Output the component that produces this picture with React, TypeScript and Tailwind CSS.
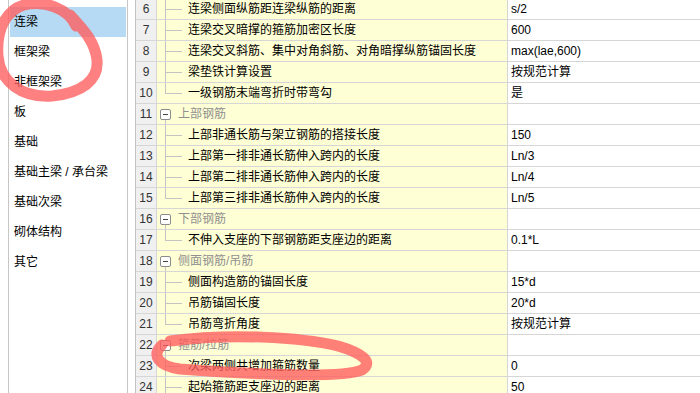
import React from "react";

type Row = {
  n: number;
  kind: "item" | "group";
  label: string;
  value?: string;
  last?: boolean;
};

const rows: Row[] = [
  { n: 6, kind: "item", label: "连梁侧面纵筋距连梁纵筋的距离", value: "s/2" },
  { n: 7, kind: "item", label: "连梁交叉暗撑的箍筋加密区长度", value: "600" },
  { n: 8, kind: "item", label: "连梁交叉斜筋、集中对角斜筋、对角暗撑纵筋锚固长度", value: "max(lae,600)" },
  { n: 9, kind: "item", label: "梁垫铁计算设置", value: "按规范计算" },
  { n: 10, kind: "item", label: "一级钢筋末端弯折时带弯勾", value: "是", last: true },
  { n: 11, kind: "group", label: "上部钢筋" },
  { n: 12, kind: "item", label: "上部非通长筋与架立钢筋的搭接长度", value: "150" },
  { n: 13, kind: "item", label: "上部第一排非通长筋伸入跨内的长度", value: "Ln/3" },
  { n: 14, kind: "item", label: "上部第二排非通长筋伸入跨内的长度", value: "Ln/4" },
  { n: 15, kind: "item", label: "上部第三排非通长筋伸入跨内的长度", value: "Ln/5", last: true },
  { n: 16, kind: "group", label: "下部钢筋" },
  { n: 17, kind: "item", label: "不伸入支座的下部钢筋距支座边的距离", value: "0.1*L", last: true },
  { n: 18, kind: "group", label: "侧面钢筋/吊筋" },
  { n: 19, kind: "item", label: "侧面构造筋的锚固长度", value: "15*d" },
  { n: 20, kind: "item", label: "吊筋锚固长度", value: "20*d" },
  { n: 21, kind: "item", label: "吊筋弯折角度", value: "按规范计算", last: true },
  { n: 22, kind: "group", label: "箍筋/拉筋" },
  { n: 23, kind: "item", label: "次梁两侧共增加箍筋数量", value: "0" },
  { n: 24, kind: "item", label: "起始箍筋距支座边的距离", value: "50" },
];

const menu = ["连梁", "框架梁", "非框架梁", "板", "基础", "基础主梁 / 承台梁", "基础次梁", "砌体结构", "其它"];

function TreeCell({ row }: { row: Row }) {
  if (row.kind === "group") {
    return (
      <div className="relative flex h-full items-center">
        <div className="ml-[3px] flex h-[11px] w-[11px] items-center justify-center rounded-[2px] border border-[#8c8c8c] bg-white">
          <div className="h-px w-[5px] bg-[#444]" />
        </div>
        <span className="ml-[7px] text-[#8f8f8f]">{row.label}</span>
        <div className="absolute bottom-0 left-[8px] h-[4px] w-px bg-[#c4c4c4]" />
      </div>
    );
  }
  return (
    <div className="relative flex h-full items-center">
      <div className={`absolute left-[8px] top-0 w-px bg-[#c4c4c4] ${row.last ? "h-[10px]" : "h-full"}`} />
      <div className="absolute left-[8px] top-[10px] h-px w-[17px] bg-[#c4c4c4]" />
      <span className="ml-[31px] text-black">{row.label}</span>
    </div>
  );
}

export default function App() {
  return (
    <div
      className="relative flex h-[393px] w-[700px] overflow-hidden bg-white text-[12px] leading-none"
      style={{ fontFamily: '"Liberation Sans", "Noto Sans CJK SC", sans-serif' }}
    >
      {/* left category list */}
      <div className="w-[128px] shrink-0 pl-2">
        <div className="h-full border-x border-[#c6c6c6] pt-[7px]">
          {menu.map((m, i) => (
            <div
              key={m}
              className={`mx-px flex h-[30px] items-center pl-[4px] text-black ${i === 0 ? "bg-[#b6daf3]" : ""}`}
            >
              {m}
            </div>
          ))}
        </div>
      </div>

      {/* property grid */}
      <div className="ml-[7px] flex-1 border-l border-[#c2c2c2]">
        <div className="-mt-px">
          {rows.map((r) => (
            <div key={r.n} className="flex h-[21px] border-b border-[#d6d6d6]">
              <div className="flex w-[21px] shrink-0 items-center justify-center border-r border-[#d6d6d6] bg-[#f0f0f0] text-[#333]">
                {r.n}
              </div>
              <div className="w-[351px] shrink-0 border-r border-[#d6d6d6] bg-[#ffffd5]">
                <TreeCell row={r} />
              </div>
              <div className="flex flex-1 items-center bg-white pl-[3px] text-black">{r.value ?? ""}</div>
            </div>
          ))}
        </div>
      </div>

      {/* red marker annotations */}
      <svg className="pointer-events-none absolute inset-0" width="700" height="393" viewBox="0 0 700 393">
        <g fill="none" stroke="#ff5c5c" strokeOpacity="0.78" strokeLinecap="round" strokeLinejoin="round">
          <path
            d="M 76 26 C 68 8, 44 0, 24 5 C 6 10, -4 30, -2 56 C 0 82, 22 98, 52 96 C 82 93, 99 80, 97 60 C 95 42, 84 30, 70 15"
            strokeWidth="11"
          />
          <path
            d="M 170 341 C 230 333, 300 337, 338 346 C 362 353, 374 362, 362 370 C 340 379, 250 374, 180 369 C 158 366, 151 355, 162 345"
            strokeWidth="11"
          />
        </g>
      </svg>
    </div>
  );
}
